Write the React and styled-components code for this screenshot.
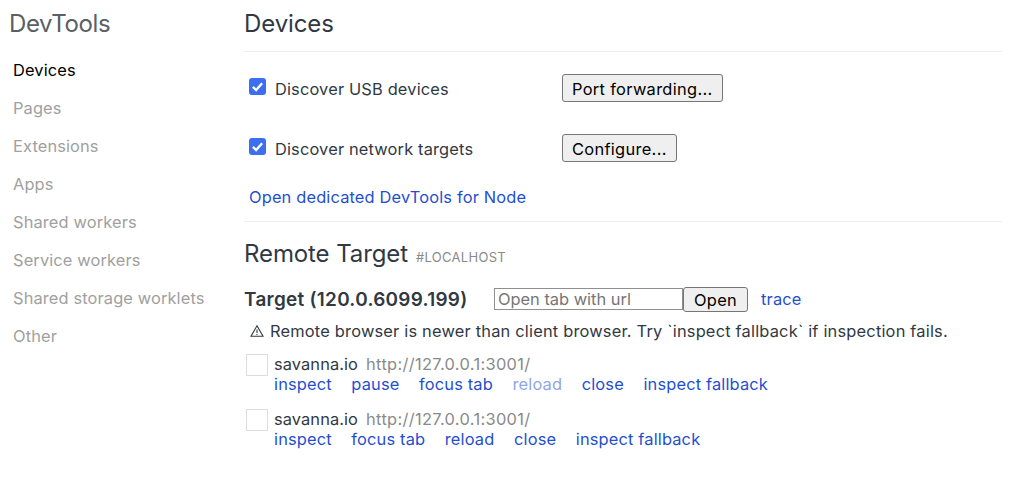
import React from 'react';
import styled, { createGlobalStyle } from 'styled-components';

const Global = createGlobalStyle`
  html, body { margin: 0; padding: 0; background: #fff; }
  body { font-family: Inter, "Liberation Sans", sans-serif; font-size: 16.4px; letter-spacing: .16px; color: #303942; }
`;
const Page = styled.div`display: flex; width: 1036px; height: 498px; overflow: hidden;`;
const Side = styled.nav`width: 244px; flex: none; padding: 9px 0 0 9px; box-sizing: border-box;`;
const Brand = styled.h1`margin: 0 0 12px; font-size: 24px; letter-spacing: -.4px; font-weight: 400; line-height: 30px; color: #5a5f66;`;
const NavItem = styled.div`
  height: 38px; line-height: 38px; padding-left: 4px; letter-spacing: .13px;
  color: ${p => (p.$active ? '#000' : '#a0a0a0')};
`;
const Main = styled.main`width: 758px; flex: none;`;
const Title = styled.h2`
  margin: 0 0 6px; padding-top: 9px; height: 42px; font-size: 24px; letter-spacing: -.1px; font-weight: 400; line-height: 30px;
  color: #303942; border-bottom: 1px solid #eee;
`;
const OptionRow = styled.div`display: flex; align-items: center; height: 60px; padding-left: 5px;`;
const OptionLabel = styled.label`display: flex; align-items: center; width: 313px; flex: none; color: #303942; padding-top: 2px;`;
const Check = styled.span`
  width: 17px; height: 17px; border-radius: 3px; background: #3b6ff0; margin: -6px 9px 0 0; display: flex; flex: none;
  align-items: center; justify-content: center;
`;
const Btn = styled.button`
  font: inherit; letter-spacing: .32px; color: #000; background: #efefef; border: 1px solid #767676; border-radius: 3px;
  height: 28px; padding: 1px 9px 0; box-sizing: border-box; line-height: 24px;
`;
const NodeRow = styled.div`padding: 0 0 12px 5px; border-bottom: 1px solid #eee; height: 24px; line-height: 24px; margin-top: 7px;`;
const Link = styled.a`color: ${p => (p.$off ? '#8fa6e6' : '#1f4fcf')}; text-decoration: none;`;
const RemoteHead = styled.div`display: flex; align-items: baseline; margin-top: 16px; height: 32px;`;
const RemoteTitle = styled.h2`margin: 0; font-size: 24px; letter-spacing: -.1px; font-weight: 400; line-height: 32px; color: #303942;`;
const Sub = styled.span`margin-left: 8px; font-size: 13px; letter-spacing: .3px; color: #8a8a8a;`;
const TargetRow = styled.div`display: flex; align-items: center; margin-top: 16px; height: 26px;`;
const TargetName = styled.strong`font-weight: 600; font-size: 18.9px; letter-spacing: .29px; width: 250px; flex: none; color: #303942; white-space: nowrap;`;
const UrlInput = styled.input`
  font: inherit; letter-spacing: 0; width: 189px; height: 22px; box-sizing: border-box; border: 1px solid #8f8f8f; padding: 0 3px;
  color: #303942; margin: 0; outline: none;
  &::placeholder { color: #757575; opacity: 1; }
`;
const OpenBtn = styled(Btn)`height: 25px; padding: 0 10px; margin-right: 13px;`;
const Warning = styled.div`display: flex; align-items: center; height: 24px; margin-top: 7px; padding-left: 6px; white-space: nowrap; letter-spacing: .2px;`;
const WarnIcon = styled.svg`width: 14px; height: 14px; margin-right: 6px; flex: none;`;
const Item = styled.div`display: flex; margin-top: ${p => p.$gap}px; height: 40px;`;
const Thumb = styled.div`
  width: 20px; height: 20px; border: 1px solid #ddd; margin: 0 6px 0 2px; flex: none;
`;
const ItemBody = styled.div`display: flex; flex-direction: column; line-height: 20px;`;
const ItemHead = styled.div`display: flex; gap: 8px;`;
const Name = styled.span`color: #303942; letter-spacing: .1px;`;
const Url = styled.span`color: #8a8a8a; letter-spacing: .34px;`;
const Actions = styled.div`display: flex; gap: 19.6px;`;

const nav = ['Devices', 'Pages', 'Extensions', 'Apps', 'Shared workers', 'Service workers', 'Shared storage worklets', 'Other'];
const Tick = () => (
  <svg width="15" height="15" viewBox="0 0 13 13"><path d="M2.5 6.8l2.8 2.8 5.2-6" fill="none" stroke="#fff" strokeWidth="2" /></svg>
);
const Target = ({ gap, actions }) => (
  <Item $gap={gap}>
    <Thumb />
    <ItemBody>
      <ItemHead><Name>savanna.io</Name><Url>http://127.0.0.1:3001/</Url></ItemHead>
      <Actions>
        {actions.map(a => <Link key={a} href="#" $off={a === 'reload*'}>{a.replace('*', '')}</Link>)}
      </Actions>
    </ItemBody>
  </Item>
);

export default function App() {
  return (
    <Page>
      <Global />
      <Side>
        <Brand>DevTools</Brand>
        {nav.map((n, i) => <NavItem key={n} $active={i === 0}>{n}</NavItem>)}
      </Side>
      <Main>
        <Title>Devices</Title>
        <OptionRow>
          <OptionLabel><Check><Tick /></Check>Discover USB devices</OptionLabel>
          <Btn>Port forwarding...</Btn>
        </OptionRow>
        <OptionRow>
          <OptionLabel><Check><Tick /></Check>Discover network targets</OptionLabel>
          <Btn>Configure...</Btn>
        </OptionRow>
        <NodeRow><Link href="#">Open dedicated DevTools for Node</Link></NodeRow>
        <RemoteHead><RemoteTitle>Remote Target</RemoteTitle><Sub>#LOCALHOST</Sub></RemoteHead>
        <TargetRow>
          <TargetName>Target (120.0.6099.199)</TargetName>
          <UrlInput placeholder="Open tab with url" />
          <OpenBtn>Open</OpenBtn>
          <Link href="#">trace</Link>
        </TargetRow>
        <Warning>
          <WarnIcon viewBox="0 0 14 14"><path d="M7 1.8L13 12.2H1zM7 5.5v3.6M7 10v1" fill="none" stroke="#303942" strokeWidth="1.1" /></WarnIcon>
          Remote browser is newer than client browser. Try `inspect fallback` if inspection fails.
        </Warning>
        <Target gap={11} actions={['inspect', 'pause', 'focus tab', 'reload*', 'close', 'inspect fallback']} />
        <Target gap={15} actions={['inspect', 'focus tab', 'reload', 'close', 'inspect fallback']} />
      </Main>
    </Page>
  );
}
